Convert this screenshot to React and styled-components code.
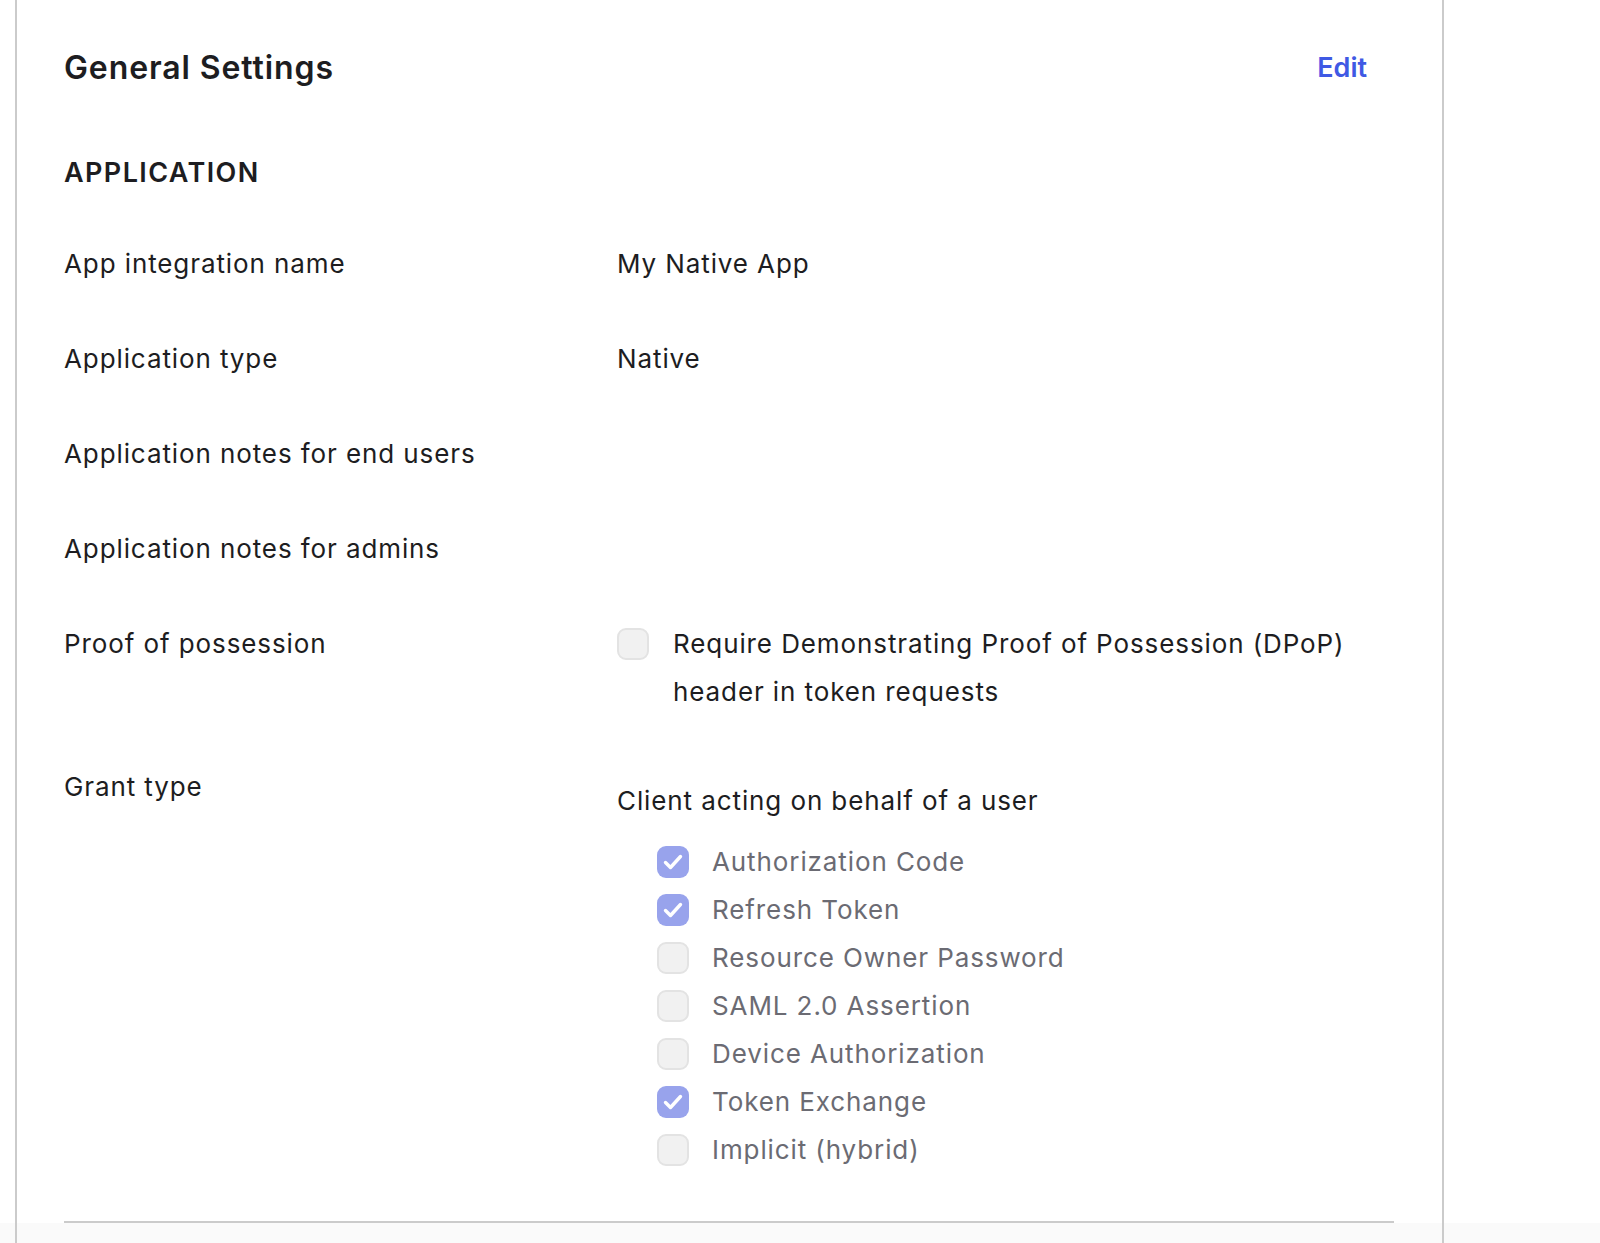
import React from "react";
import styled, { createGlobalStyle } from "styled-components";

const GlobalStyle = createGlobalStyle`
  html, body {
    margin: 0;
    padding: 0;
    background: #ffffff;
  }
  body {
    font-family: "Inter", "Noto Sans", sans-serif;
    color: #1d1d21;
    -webkit-font-smoothing: antialiased;
  }
`;

const grantTypes = [
  { label: "Authorization Code", checked: true },
  { label: "Refresh Token", checked: true },
  { label: "Resource Owner Password", checked: false },
  { label: "SAML 2.0 Assertion", checked: false },
  { label: "Device Authorization", checked: false },
  { label: "Token Exchange", checked: true },
  { label: "Implicit (hybrid)", checked: false },
];

const CheckMark = () => (
  <svg width="32" height="32" viewBox="0 0 32 32" fill="none">
    <polyline
      points="8.5,16.5 13.5,21.5 23.5,10.5"
      stroke="#ffffff"
      strokeWidth="3.4"
      strokeLinecap="round"
      strokeLinejoin="round"
    />
  </svg>
);

const Checkbox = ({ checked }) => (
  <Box $checked={checked}>{checked && <CheckMark />}</Box>
);

const App = () => {
  return (
    <>
      <GlobalStyle />
      <Band>
        <Frame>
          <Header>
            <Title>General Settings</Title>
            <EditLink href="#" onClick={(e) => e.preventDefault()}>
              Edit
            </EditLink>
          </Header>

          <SectionTitle>APPLICATION</SectionTitle>

          <Fields>
            <Field>
              <Label>App integration name</Label>
              <Value>My Native App</Value>
            </Field>
            <Field>
              <Label>Application type</Label>
              <Value>Native</Value>
            </Field>
            <Field>
              <Label>Application notes for end users</Label>
              <Value />
            </Field>
            <Field>
              <Label>Application notes for admins</Label>
              <Value />
            </Field>
            <Field>
              <Label>Proof of possession</Label>
              <Value>
                <CheckRow>
                  <Checkbox checked={false} />
                  <CheckText>
                    Require Demonstrating Proof of Possession (DPoP) header in
                    token requests
                  </CheckText>
                </CheckRow>
              </Value>
            </Field>
            <Field>
              <Label>Grant type</Label>
              <Value $offset>
                <GroupTitle>Client acting on behalf of a user</GroupTitle>
                <GrantList>
                  {grantTypes.map((g) => (
                    <GrantItem key={g.label}>
                      <Checkbox checked={g.checked} />
                      <GrantText>{g.label}</GrantText>
                    </GrantItem>
                  ))}
                </GrantList>
              </Value>
            </Field>
          </Fields>

          <Divider />
        </Frame>
      </Band>
      <Band $muted>
        <Frame $short />
      </Band>
    </>
  );
};

export default App;

const Band = styled.div`
  background: ${(p) => (p.$muted ? "#fafafa" : "#ffffff")};
  padding-left: 15px;
`;

const Frame = styled.div`
  box-sizing: border-box;
  width: 1429px;
  min-height: ${(p) => (p.$short ? "40px" : "auto")};
  border-left: 2px solid #cbcbcb;
  border-right: 2px solid #cbcbcb;
  padding: 0 48px 0 47px;
`;

const Header = styled.div`
  display: flex;
  align-items: center;
  justify-content: space-between;
  padding-top: 48px;
  padding-right: 27px;
`;

const Title = styled.h1`
  margin: 0;
  font-size: 32px;
  line-height: 40px;
  font-weight: 600;
  letter-spacing: 0.9px;
  color: #1d1d21;
`;

const EditLink = styled.a`
  font-size: 27px;
  line-height: 40px;
  font-weight: 600;
  color: #3f59e4;
  text-decoration: none;
`;

const SectionTitle = styled.h2`
  margin: 67px 0 0;
  font-size: 27px;
  line-height: 36px;
  font-weight: 600;
  letter-spacing: 1.4px;
  color: #1d1d21;
`;

const Fields = styled.div`
  display: flex;
  flex-direction: column;
  gap: 47px;
  margin-top: 49px;
`;

const Field = styled.div`
  display: grid;
  grid-template-columns: 553px 1fr;
  font-size: 26px;
  line-height: 48px;
  letter-spacing: 0.9px;
`;

const Label = styled.div`
  color: #1d1d21;
`;

const Value = styled.div`
  color: #1d1d21;
  padding-top: ${(p) => (p.$offset ? "14px" : "0")};
`;

const CheckRow = styled.div`
  display: flex;
  align-items: flex-start;
  gap: 24px;

  & > span:first-child {
    margin-top: 8px;
  }
`;

const Box = styled.span`
  flex: 0 0 auto;
  display: flex;
  align-items: center;
  justify-content: center;
  width: 32px;
  height: 32px;
  box-sizing: border-box;
  border-radius: 9px;
  background: ${(p) => (p.$checked ? "#98a3ec" : "#f1f1f1")};
  border: ${(p) => (p.$checked ? "none" : "2px solid #e3e3e3")};
`;

const CheckText = styled.span`
  color: #1d1d21;
`;

const GroupTitle = styled.div`
  color: #1d1d21;
`;

const GrantList = styled.ul`
  list-style: none;
  margin: 13px 0 0;
  padding: 0 0 0 40px;
`;

const GrantItem = styled.li`
  display: flex;
  align-items: center;
  gap: 23px;
  height: 48px;
`;

const GrantText = styled.span`
  color: #6b6b73;
`;

const Divider = styled.hr`
  margin: 47px 0 0;
  border: none;
  height: 2px;
  background: #cbcbcb;
`;
